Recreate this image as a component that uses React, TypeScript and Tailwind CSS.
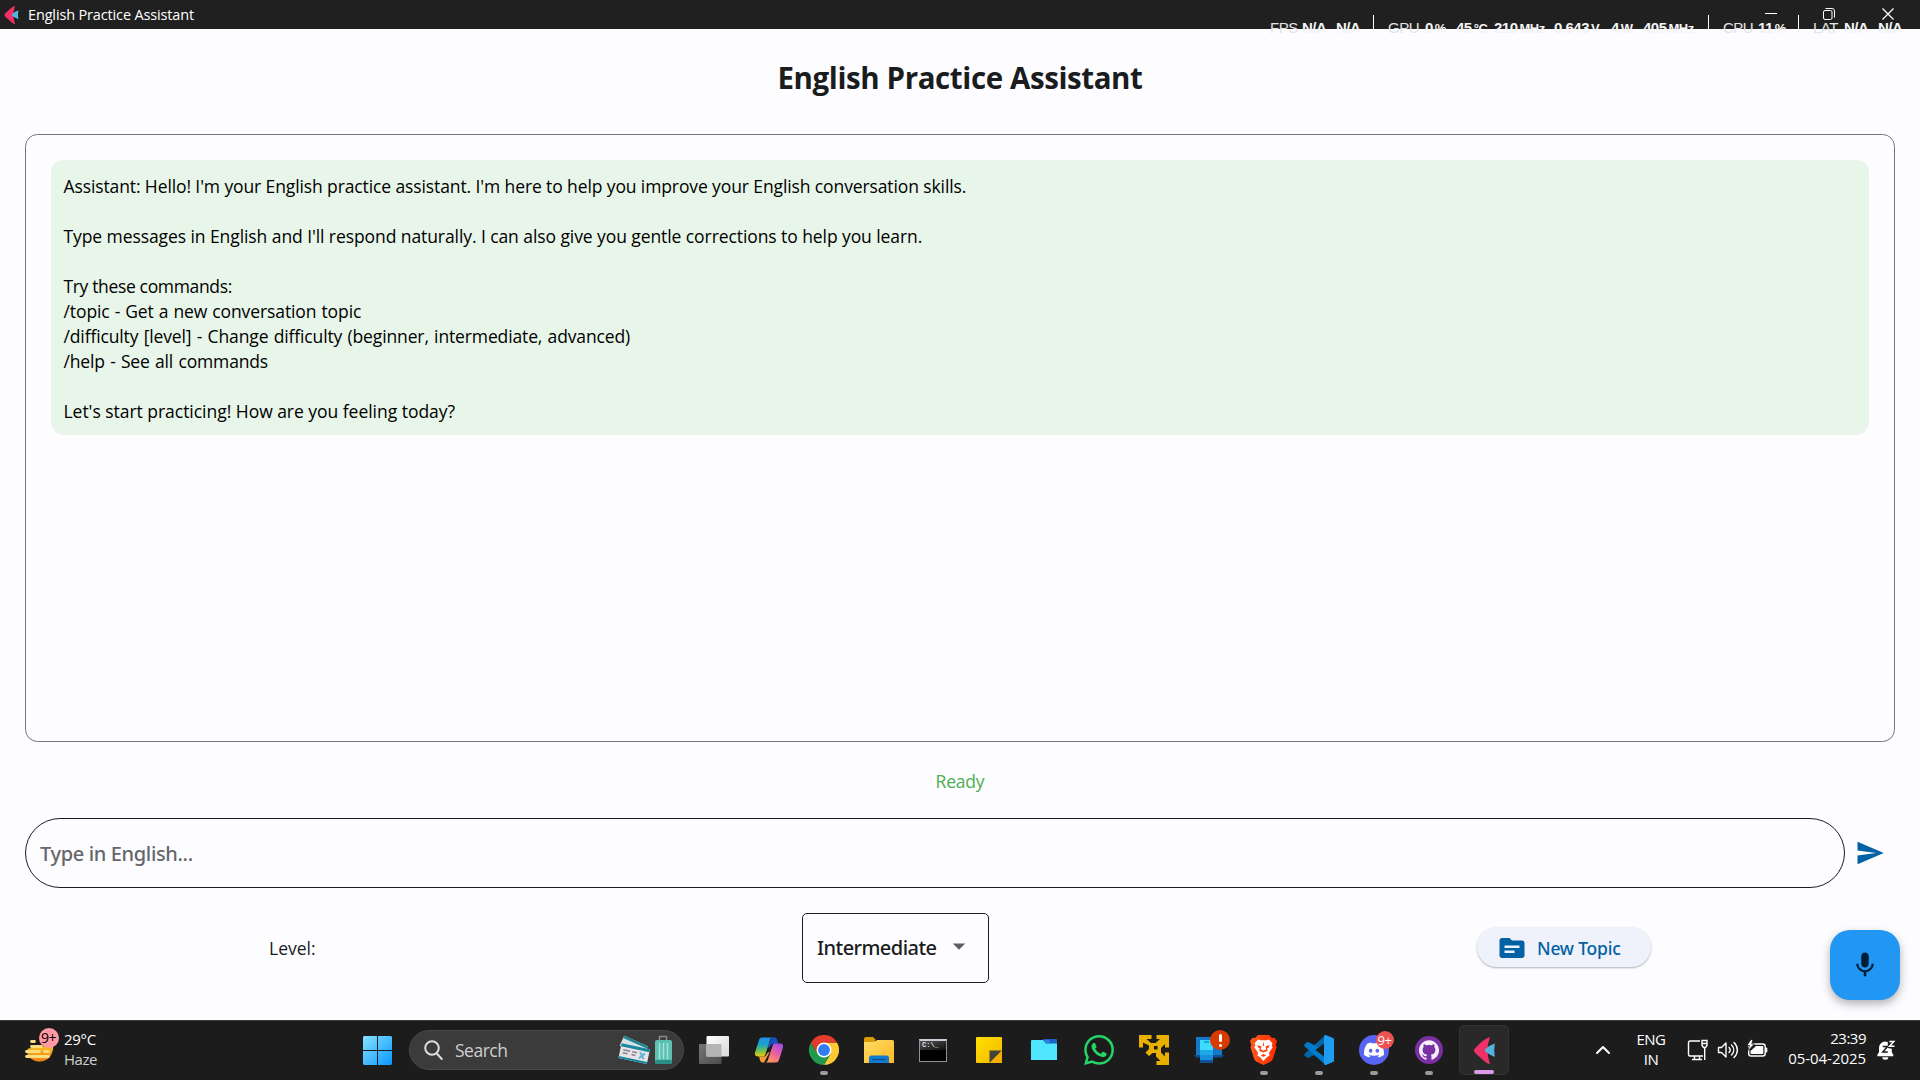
import type { ReactNode } from 'react';
import { MdSend, MdMic, MdTopic, MdArrowDropDown } from 'react-icons/md';
import { SiWhatsapp, SiDiscord, SiGithub } from 'react-icons/si';

function FletLogo({ className }: { className: string }) {
  return (
    <svg viewBox="0 0 21 27" className={className}>
      <path d="M16 0 Q11 13.5 16 27 Q13 27 8 22 Q3 18 .6 15.2 Q-.5 13.5 .6 11.8 Q4 8 8 4.500 Q12 1 16 0Z" fill="#ee3167" />
      <path d="M20.800 6.500 Q19.500 13.500 20.800 20 Q16 18 11.500 14.800 Q10.200 13.400 11.500 12 Q16 8 20.800 6.500Z" fill="#55b3e0" />
    </svg>
  );
}

const stats: { text: string; unit?: string; box: string; bold?: boolean; rule?: boolean }[] = [
  { text: 'FPS', box: 'w-[32px]' },
  { text: 'N/A', box: 'w-[34px]', bold: true },
  { text: 'N/A', box: 'w-[34px]', bold: true },
  { text: '', box: 'w-[18px]', rule: true },
  { text: 'GPU', box: 'w-[37px]' },
  { text: '0', unit: '%', box: 'w-[31px]', bold: true },
  { text: '45', unit: '°C', box: 'w-[38px]', bold: true },
  { text: '210', unit: 'MHz', box: 'w-[60px]', bold: true },
  { text: '0.643', unit: 'V', box: 'w-[57px]', bold: true },
  { text: '4', unit: 'W', box: 'w-[32px]', bold: true },
  { text: '405', unit: 'MHz', box: 'w-[62px]', bold: true },
  { text: '', box: 'w-[18px]', rule: true },
  { text: 'CPU', box: 'w-[35px]' },
  { text: '11', unit: '%', box: 'w-[37px]', bold: true },
  { text: '', box: 'w-[18px]', rule: true },
  { text: 'LAT', box: 'w-[31px]' },
  { text: 'N/A', box: 'w-[34px]', bold: true },
  { text: 'N/A', box: 'w-[26px]', bold: true },
];

function PerformanceOverlay() {
  return (
    <div className="pointer-events-none absolute left-[1270px] top-[15px] z-10 flex h-[26px] font-['Liberation_Sans'] text-[15px] leading-[26px] text-[#f4f4f4]">
      {stats.map((s, i) => (
        <div key={i} className={`${s.box} shrink-0 whitespace-nowrap tracking-[-0.500px] ${s.bold ? 'font-bold' : 'text-[#e4e4e4]'}`}>
          {s.rule ? <div className="ml-[3px] h-[26px] w-px bg-white" /> : s.text}
          {s.unit && <span className="ml-[2px] text-[13px]">{s.unit}</span>}
        </div>
      ))}
    </div>
  );
}

function TitleBar() {
  return (
    <header className="relative flex h-[29px] shrink-0 items-center bg-[#202020] text-white">
      <FletLogo className="ml-[4px] h-[18px] w-[15px]" />
      <span className="ml-[9px] whitespace-nowrap text-[14.500px] tracking-[-0.150px]">English Practice Assistant</span>
      <svg width="160" height="29" className="ml-auto" fill="none" stroke="#fff">
        <path d="M5 13.500h12" />
        <rect x="63.500" y="10.500" width="8.500" height="9" rx="1.500" />
        <path d="M65.500 8.500h6.500a2.500 2.500 0 0 1 2.500 2.500v6.500" />
        <path d="M122.500 8.500l11 11M133.500 8.500l-11 11" strokeWidth="1.200" />
      </svg>
      <PerformanceOverlay />
    </header>
  );
}

const lines: { text: string; track: string }[] = [
  { text: "Assistant: Hello! I'm your English practice assistant. I'm here to help you improve your English conversation skills.", track: 'tracking-[-0.110px]' },
  { text: '', track: '' },
  { text: "Type messages in English and I'll respond naturally. I can also give you gentle corrections to help you learn.", track: 'tracking-[-0.080px]' },
  { text: '', track: '' },
  { text: 'Try these commands:', track: 'tracking-[-0.350px]' },
  { text: '/topic - Get a new conversation topic', track: 'tracking-[-0.100px] [word-spacing:0.600px]' },
  { text: '/difficulty [level] - Change difficulty (beginner, intermediate, advanced)', track: 'tracking-[-0.130px] [word-spacing:0.900px]' },
  { text: '/help - See all commands', track: 'tracking-[-0.150px] [word-spacing:0.900px]' },
  { text: '', track: '' },
  { text: "Let's start practicing! How are you feeling today?", track: 'tracking-[-0.030px]' },
];

function Copilot() {
  return (
    <svg width="30" height="30" viewBox="0 0 30 30">
      <defs>
        <linearGradient id="cpA" x1="0" y1="0" x2="0" y2="1">
          <stop offset="0" stopColor="#1b8fe8" /><stop offset=".4" stopColor="#1ea5c8" /><stop offset=".7" stopColor="#6fc04a" /><stop offset="1" stopColor="#f2c811" />
        </linearGradient>
        <linearGradient id="cpB" x1=".8" y1="0" x2=".2" y2="1">
          <stop offset="0" stopColor="#a24be8" /><stop offset=".5" stopColor="#ee5fa0" /><stop offset="1" stopColor="#ffa052" />
        </linearGradient>
      </defs>
      <path d="M18 2.500h2.500c2 0 2.500 1.500 3 3l.8 3.200h-4.800c-2 0-2.800 1.200-3.400 3L13 13z" fill="#1a4fc4" />
      <path d="M10 27.500H8.500c-1.500 0-2.200-1.300-2.700-3l-.8-3h5c1.800 0 2.500-1.500 3-3l3-2z" fill="#f59b3a" />
      <path d="M8 2.500h11c-2 0-2.700 1.500-3.200 3.200L11.500 19c-.6 1.900-1.500 2.500-3.300 2.500H4c-2.500 0-3.600-1.500-2.900-4.200L4.500 6.500C5.300 3.800 6 2.500 8 2.500z" fill="url(#cpA)" />
      <path d="M22 27.500H11c2 0 2.700-1.500 3.200-3.200L18.500 11c.6-1.900 1.500-2.500 3.300-2.500H26c2.500 0 3.600 1.500 2.900 4.200l-3.400 10.800c-.8 2.700-1.500 4-3.500 4z" fill="url(#cpB)" />
    </svg>
  );
}

function Chrome() {
  return (
    <svg width="30" height="30" viewBox="0 0 48 48">
      <path d="M24 12h20.800A24 24 0 0 1 24 48l10.400-18z" fill="#fcc934" />
      <path d="M13.600 30 3.200 12A24 24 0 0 0 24 48l10.400-18z" fill="#229a4d" />
      <path d="M24 12h20.800A24 24 0 0 0 3.200 12l10.400 18z" fill="#e33b2e" />
      <circle cx="24" cy="24" r="12" fill="#fff" />
      <circle cx="24" cy="24" r="9.500" fill="#2f7df0" />
    </svg>
  );
}

function Explorer() {
  return (
    <svg width="30" height="30" viewBox="0 0 30 30">
      <defs>
        <linearGradient id="exF" x1="0" y1="0" x2="1" y2="1"><stop offset="0" stopColor="#ffdc6b" /><stop offset="1" stopColor="#fbb91f" /></linearGradient>
      </defs>
      <path d="M0 4a2 2 0 0 1 2-2h7l3 3h-1v5H0z" fill="#dd9b06" />
      <path d="M0 7h10l3-2h15.500A1.500 1.500 0 0 1 30 6.500V28H0z" fill="url(#exF)" />
      <path d="M5 28v-5a2.500 2.500 0 0 1 2.500-2.500h15A2.500 2.500 0 0 1 25 23v5z" fill="#0f7ad0" />
      <path d="M8 24.500h14" stroke="#0a4f8e" strokeWidth="1.300" />
    </svg>
  );
}

function Terminal() {
  return (
    <div className="mr-[2px] flex h-[23px] w-[28px] flex-col overflow-hidden border border-[#8d929c] border-t-2 border-t-[#c9ced8] bg-black">
      <div className="h-[9px] bg-linear-to-br from-[#555] to-[#111] pl-[2px] font-['Liberation_Mono'] text-[7px] font-bold leading-[8px] text-[#ddd]">C:\_</div>
    </div>
  );
}

function Sticky() {
  return (
    <svg width="26" height="26" viewBox="0 0 26 26">
      <defs><linearGradient id="stN" x1="0" y1="0" x2="1" y2="1"><stop offset="0" stopColor="#ffe000" /><stop offset="1" stopColor="#f5b800" /></linearGradient></defs>
      <rect width="26" height="26" rx="1" fill="url(#stN)" />
      <path d="M13.500 13.500H26L13.500 26z" fill="#46433c" />
      <path d="M26 13.500V26H13.500z" fill="#f3ae00" />
    </svg>
  );
}

function CyanFolder() {
  return (
    <svg width="26" height="22" viewBox="0 0 26 22">
      <rect x="12" width="14" height="9" rx="1" fill="#1c62c8" />
      <path d="M1 1h11l3 3.500h11V21H0V2a1 1 0 0 1 1-1z" fill="#50e6ff" />
      <path d="M12 1l3 3.500h5L18 1z" fill="#2a86dd" />
    </svg>
  );
}

function GoldArrows() {
  return (
    <svg width="30" height="30" viewBox="0 0 30 30" fill="#eab000">
      <path d="M0 0h12.500v4H7.500L12 8h4.500l4.500-4h-3.500V0H30v12.500h-4V9l-4 4v4.500l4 4v-4h4V30H17.500v-4h4l-4.500-4.500V18h-3.500L10 21 6.500 17.500l3.500-3.500v-3.500L4 7.500v5H0z" />
      <rect x="15" y="11" width="3.500" height="3.500" fill="#1c1c1c" />
    </svg>
  );
}

function PhoneLink() {
  return (
    <svg width="30" height="28" viewBox="0 0 30 28">
      <path d="M2 1h26v18H2z" fill="#1478c8" />
      <path d="M0 19h30l-2 2.500H2z" fill="#0b4f8f" />
      <rect x="6" y="4" width="13" height="23" fill="#1690dc" />
      <rect x="6" y="4" width="13" height="10" fill="#3ddcff" />
      <rect x="6" y="14" width="13" height="5" fill="#1fa8e8" />
      <rect x="6" y="24" width="13" height="3" fill="#0f4f96" />
      <path d="M10 6h5" stroke="#1478c8" strokeWidth="1.200" />
    </svg>
  );
}

function Brave() {
  return (
    <svg width="27" height="30" viewBox="0 0 27 30" className="mr-[1px]">
      <defs><linearGradient id="brv"><stop offset="0" stopColor="#ff5a1c" /><stop offset="1" stopColor="#ff2b00" /></linearGradient></defs>
      <path d="M8 0h11l3 3 2.500-.3L27 6l-1.200 4 .8 2-3.600 11.500c-.5 1.500-1.500 2.500-3 3.500L13.500 30 7 27c-1.500-1-2.500-2-3-3.500L.4 12l.8-2L0 6l2.500-3.300L5 3z" fill="url(#brv)" />
      <path d="M8 4.500l2.500.8h6l2.500-.8 3.500 3.800-.8 2.200 1 1.800-3.700 5.500.6 2.700-3 2-3.100 3.500-3.100-3.500-3-2 .6-2.700-3.700-5.500 1-1.800-.8-2.200z" fill="#fff" />
      <path d="M7 10.300l4.500.9-.8 3 2.800 1.600 2.800-1.600-.8-3 4.500-.9-1.500 2.500-1.200.5.300 2.700-4.100 1.500-4.100-1.500.3-2.700-1.200-.5zM13.500 6l.7 5h-1.400zM10.800 20.300l2.700-1.200 2.700 1.200-2.700 1.700z" fill="#ff4310" />
    </svg>
  );
}

function VsCode() {
  return (
    <svg width="30" height="30" viewBox="0 0 30 30">
      <path d="M21.500 0 29 3.300v7L5.200 22.500 3.500 23 .3 20.500v-1.500L21.500 0z" fill="#0065a9" />
      <path d="M21.500 30 29 26.500v-7L5.200 7.500 3.500 7 .3 9.500V11l21.200 19z" fill="#007acc" />
      <path d="M21.500 0 30 3.500v23L21.500 30c-.8.100-1.500-.5-1.500-1.500v-27C20 .5 20.700-.1 21.500 0z" fill="#1f9cf0" />
      <path d="M20 8.500v13L11.500 15z" fill="#1c1c1c" />
    </svg>
  );
}

function TaskView() {
  return (
    <svg width="30" height="28" viewBox="0 0 30 28">
      <defs>
        <linearGradient id="tvA" x1="0" y1="0" x2="1" y2="1"><stop offset="0" stopColor="#fff" /><stop offset="1" stopColor="#d8d8d8" /></linearGradient>
        <linearGradient id="tvB" x1="0" y1="0" x2="1" y2="1"><stop offset="0" stopColor="#777" /><stop offset="1" stopColor="#4c4c4c" /></linearGradient>
      </defs>
      <rect x="0" y="8" width="22.500" height="20" rx="1" fill="url(#tvB)" />
      <rect x="7.500" y="0" width="22.500" height="20.500" rx="1" fill="url(#tvA)" />
      <rect x="7.500" y="8" width="15" height="12.500" fill="#b4b4b4" />
    </svg>
  );
}

function GitHub() {
  return (
    <div className="flex size-[28px] items-center justify-center rounded-full bg-[#7a2fa3]">
      <SiGithub size={20} color="#f6effa" />
    </div>
  );
}

function Discord() {
  return (
    <div className="flex size-[30px] items-center justify-center rounded-full bg-[#5865f2]">
      <SiDiscord size={20} color="#fff" />
    </div>
  );
}

const apps: { icon: ReactNode; open?: boolean; badge?: ReactNode }[] = [
  { icon: <TaskView /> },
  { icon: <Copilot /> },
  { icon: <Chrome />, open: true },
  { icon: <Explorer /> },
  { icon: <Terminal /> },
  { icon: <Sticky /> },
  { icon: <CyanFolder /> },
  { icon: <SiWhatsapp size={30} color="#25d366" /> },
  { icon: <GoldArrows /> },
  {
    icon: <PhoneLink />,
    badge: (
      <div className="absolute left-[28.500px] top-[9px] flex size-[20px] flex-col items-center justify-center gap-[2px] rounded-full bg-[#d83b01]">
        <div className="h-[8px] w-[3px] rounded-full bg-white" />
        <div className="size-[3px] rounded-full bg-white" />
      </div>
    ),
  },
  { icon: <Brave />, open: true },
  { icon: <VsCode />, open: true },
  {
    icon: <Discord />,
    open: true,
    badge: <div className="absolute left-[29px] top-[10px] flex size-[18px] items-center justify-center rounded-full bg-[#ee5253] text-[13px] leading-none tracking-[-0.500px] text-white">9+</div>,
  },
  { icon: <GitHub />, open: true },
];

function Weather() {
  return (
    <div className="relative ml-[25px] h-[45px] w-[34px]">
      <svg width="34" height="45" viewBox="0 0 34 45">
        <defs><linearGradient id="sun" x1="0" y1="0" x2="0" y2="1"><stop offset="0" stopColor="#fcc626" /><stop offset="1" stopColor="#ee7d12" /></linearGradient></defs>
        <path d="M3 20.500A14 15 0 0 0 2 25a13 12 0 0 0 25 0 14 14 0 0 0 1-8z" fill="url(#sun)" />
        <g stroke="#fbdc7e" strokeWidth="2.800" strokeLinecap="round">
          <path d="M6.500 13.500h3M6.500 18.500h10M1.500 23.500h13M19.500 23.500h4M1.500 28.500h22" />
        </g>
      </svg>
      <div className="absolute left-[13.500px] top-0 flex size-[20px] items-center justify-center rounded-full bg-[#ff99a4] text-[14px] leading-none tracking-[-0.500px] text-black">9+</div>
    </div>
  );
}

function SearchArt() {
  return (
    <svg width="54" height="32" viewBox="0 0 54 32" className="ml-auto mr-[11px] overflow-visible">
      <g transform="rotate(24 4 4)">
        <rect x="5" y="1" width="26" height="11" fill="#d6dfe6" /><rect x="5" y="1" width="26" height="2.500" fill="#1a8797" />
      </g>
      <g transform="rotate(12 2 12)">
        <rect x="3" y="9" width="29" height="15" fill="#e8e4e6" /><rect x="3" y="9" width="29" height="3" fill="#1787a0" /><rect x="3" y="22" width="29" height="2" fill="#1787a0" />
        <path d="M6 15h7M6 18h5M15 15h5M15 18h4" stroke="#8a7f92" strokeWidth="1.500" /><path d="M23 14l5 6M28 14l-5 6" stroke="#5fb6d9" strokeWidth="2" />
      </g>
      <path d="M41.500 7V2.500h7V7" fill="none" stroke="#8a8a90" strokeWidth="1.500" />
      <rect x="37" y="6" width="17" height="24" rx="2" fill="#5cc0b2" />
      <rect x="37" y="26" width="17" height="4" rx="1.500" fill="#2b8d85" />
      <path d="M41.500 9v16M45.500 9v16M49.500 9v16" stroke="#a5e3d8" strokeWidth="1.500" />
    </svg>
  );
}

function Tray() {
  return (
    <div className="ml-auto flex h-full items-center text-[15px] leading-[20px] text-white">
      <svg width="16" height="10" viewBox="0 0 16 10" fill="none" stroke="#fff" strokeWidth="2" strokeLinecap="round" strokeLinejoin="round"><path d="M2 8l6-6 6 6" /></svg>
      <div className="-mt-[2px] ml-[23px] w-[34px] text-center tracking-[-0.500px]">ENG<br />IN</div>
      <svg width="22" height="22" viewBox="0 0 22 22" fill="none" stroke="#fff" strokeWidth="1.400" className="ml-[19px]">
        <path d="M13 2H3a1.500 1.500 0 0 0-1.500 1.500v12A1.500 1.500 0 0 0 3 17h13M5 20.500h10M7.500 17v3.500M12.500 17v3.500" />
        <path d="M15 1.500h5v5l-1.500 2h-2L15 6.500zM17.700 8.500V21M15 4.500h5" />
      </svg>
      <svg width="22" height="22" viewBox="0 0 22 22" fill="none" stroke="#fff" strokeWidth="1.400" strokeLinecap="round" strokeLinejoin="round" className="ml-[8px]">
        <path d="M1.500 8.500h3L9 4v14l-4.500-4.500h-3z" />
        <path d="M12 8.500c1.500 1.500 1.500 3.500 0 5M14.500 6c3 3 3 7 0 10M17 3.500c4.500 4.500 4.500 10.500 0 15" />
      </svg>
      <svg width="22" height="22" viewBox="0 0 22 22" className="ml-[7px]">
        <rect x="2.700" y="5" width="16.500" height="12" rx="2.500" fill="none" stroke="#fff" strokeWidth="1.400" />
        <path d="M10 7h6.500a.8.8 0 0 1 .8.800v6.500a.8.8 0 0 1-.8.800H5.300a.8.8 0 0 1-.8-.8V12z" fill="#fff" />
        <path d="M19.800 9h1v4h-1z" fill="#fff" stroke="#fff" />
        <path d="M5 .5 .8 6.500H3.500L1.500 12 8.500 5H5.800L7 .5z" fill="#fff" stroke="#1c1c1c" strokeWidth=".8" />
      </svg>
      <div className="-mt-[4px] ml-[19px] w-[79px] text-right"><div className="tracking-[-0.500px]">23:39</div><div className="tracking-[-0.050px]">05-04-2025</div></div>
      <svg width="19" height="22" viewBox="0 0 19 22" fill="#fff" className="ml-[11px] mr-[24px]">
        <path d="M8 2.500A6.200 6.200 0 0 0 2 8.700V13L.3 16v1.200h16V16L14.800 13V9.800L10.800 9V3zM5.300 18.300h6a3 2.500 0 0 1-6 0z" />
        <path d="M5.800 7.500h4.700l-4.700 5.500h5" fill="none" stroke="#1c1c1c" strokeWidth="1.500" />
        <path d="M12.300 2.500h4.500l-4.300 4.800h5" fill="none" stroke="#fff" strokeWidth="1.500" />
      </svg>
    </div>
  );
}

function Taskbar() {
  return (
    <footer className="flex h-[60px] shrink-0 items-center border-t border-[#3b3c3e] bg-[#1c1c1c] pb-px text-white">
      <Weather />
      <div className="-mt-[3px] ml-[5px] w-[120px] text-[15px] leading-[20px]">
        <div className="tracking-[-0.300px]">29°C</div>
        <div className="tracking-[-0.450px] text-[#cfcfcf]">Haze</div>
      </div>
      <svg width="29" height="29" viewBox="0 0 29 29" className="ml-[179px]">
        <defs><linearGradient id="win" gradientUnits="userSpaceOnUse" x1="0" y1="0" x2="29" y2="29"><stop offset="0" stopColor="#86e2ff" /><stop offset="1" stopColor="#0a96ff" /></linearGradient></defs>
        <path d="M1 0h13v14H0V1zM15 0h13l1 1v13H15zM0 15h14v14H1l-1-1zM15 15h14v13l-1 1H15z" fill="url(#win)" />
      </svg>
      <div className="ml-[17px] flex h-[40px] w-[275px] items-center rounded-full border border-[#4a4a4a] bg-[#3b3b3b]">
        <svg width="20" height="21" viewBox="0 0 20 21" fill="none" stroke="#dcdcdc" strokeWidth="2" strokeLinecap="round" className="ml-[14px]">
          <circle cx="8" cy="8" r="6.800" /><path d="M12.800 13.500l5 5.500" />
        </svg>
        <span className="ml-[11px] text-[17.500px] tracking-[-0.500px] text-[#cfcfcf]">Search</span>
        <SearchArt />
      </div>
      <div className="ml-[2.500px] flex h-full">
        {apps.map((a, i) => (
          <div key={i} className="relative flex h-full w-[55px] items-center justify-center">
            {a.icon}
            {a.badge}
            {a.open && <div className="absolute bottom-[4px] left-[23.500px] h-[4px] w-[8px] rounded-full bg-[#9a9a9a]" />}
          </div>
        ))}
        <div className="flex h-full w-[55px] items-center justify-center">
          <div className="relative flex size-[50px] items-center justify-center rounded-[5px] border border-[#333] bg-[#292929]">
            <FletLogo className="h-[27px] w-[21px]" />
            <div className="absolute bottom-0 left-[14px] h-[4px] w-[20px] rounded-full bg-[#dc9be8]" />
          </div>
        </div>
      </div>
      <Tray />
    </footer>
  );
}

export default function App() {
  return (
    <div className="flex h-[1080px] w-[1920px] flex-col overflow-hidden bg-[#fdfcff] font-['Open_Sans','Noto_Sans',sans-serif]">
      <TitleBar />
      <main className="flex flex-1 flex-col px-[25px]">
        <h1 className="mt-[29px] h-[40px] text-center text-[29.500px] font-bold leading-[40px] tracking-[-0.400px] text-[#1a1c1e]">English Practice Assistant</h1>
        <section className="mt-[36px] h-[608px] rounded-[12.500px] border border-[#73777f] px-[25px] pt-[25px]">
          <div className="h-[275px] rounded-[12.500px] bg-[#e8f5e9] pl-[12.500px] pt-[14px] text-[17.500px] leading-[25px] text-black">
            {lines.map((l, i) => (
              <p key={i} className={`h-[25px] whitespace-nowrap ${l.track}`}>{l.text}</p>
            ))}
          </div>
        </section>
        <p className="mt-[27px] h-[25px] text-center text-[17.500px] leading-[25px] tracking-[-0.200px] text-[#4caf50]">Ready</p>
        <div className="mt-[24px] flex items-center">
          <div className="flex h-[70px] w-[1820px] shrink-0 items-center rounded-full border border-[#1a1c1e] pl-[14px] pt-px font-['Noto_Sans'] text-[20px] font-medium tracking-[-0.350px] text-[#66676a]">Type in English...</div>
          <MdSend size={30} color="#0061a4" className="ml-[10px] shrink-0" />
        </div>
        <div className="mt-[25px] flex h-[70px] w-[1875px] items-center text-[17.500px]">
          <span className="ml-[244px] w-[533px] shrink-0 text-[#1a1c1e]">Level:</span>
          <div className="flex h-[70px] w-[187px] shrink-0 items-center rounded-[5px] border border-[#1a1c1e] pl-[14px] font-['Noto_Sans'] text-[20px] font-medium tracking-[-0.550px] text-[#1a1c1e]">
            <span className="w-[127px] shrink-0">Intermediate</span>
            <MdArrowDropDown size={30} color="#5f5f62" className="mb-[4px] shrink-0" />
          </div>
          <div className="mb-[2px] ml-[488px] flex h-[40px] w-[174px] shrink-0 items-center rounded-full bg-[#eff2fb] pl-[20px] font-['Noto_Sans'] font-medium tracking-[-0.200px] text-[#0061a4] shadow-[0_1px_2px_rgba(0,0,0,0.3)]">
            <MdTopic size={30} className="mt-[2px]" />
            <span className="ml-[10px] mt-[2px] whitespace-nowrap">New Topic</span>
          </div>
          <div className="ml-[179px] mt-[33px] flex size-[70px] shrink-0 items-center justify-center rounded-[20px] bg-[#2196f3] shadow-[0_4px_10px_rgba(0,0,0,0.3)]">
            <MdMic size={30} color="#001d36" />
          </div>
        </div>
      </main>
      <Taskbar />
    </div>
  );
}
